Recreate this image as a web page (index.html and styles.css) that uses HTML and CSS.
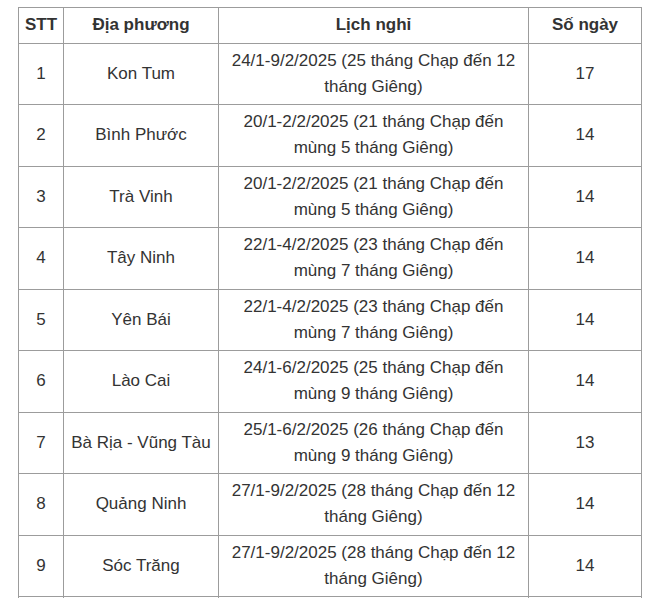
FILE: index.html
```html
<!DOCTYPE html>
<html lang="vi">
<head>
<meta charset="utf-8">
<link rel="stylesheet" href="styles.css">
</head>
<body>
<table class="tbl">
  <colgroup>
    <col class="c1"><col class="c2"><col class="c3"><col class="c4">
  </colgroup>
  <thead>
    <tr><th>STT</th><th>Địa phương</th><th>Lịch nghỉ</th><th>Số ngày</th></tr>
  </thead>
  <tbody>
    <tr><td>1</td><td>Kon Tum</td><td>24/1-9/2/2025 (25 tháng Chạp đến 12 tháng Giêng)</td><td>17</td></tr>
    <tr><td>2</td><td>Bình Phước</td><td>20/1-2/2/2025 (21 tháng Chạp đến mùng 5 tháng Giêng)</td><td>14</td></tr>
    <tr><td>3</td><td>Trà Vinh</td><td>20/1-2/2/2025 (21 tháng Chạp đến mùng 5 tháng Giêng)</td><td>14</td></tr>
    <tr><td>4</td><td>Tây Ninh</td><td>22/1-4/2/2025 (23 tháng Chạp đến mùng 7 tháng Giêng)</td><td>14</td></tr>
    <tr><td>5</td><td>Yên Bái</td><td>22/1-4/2/2025 (23 tháng Chạp đến mùng 7 tháng Giêng)</td><td>14</td></tr>
    <tr><td>6</td><td>Lào Cai</td><td>24/1-6/2/2025 (25 tháng Chạp đến mùng 9 tháng Giêng)</td><td>14</td></tr>
    <tr><td>7</td><td>Bà Rịa - Vũng Tàu</td><td>25/1-6/2/2025 (26 tháng Chạp đến mùng 9 tháng Giêng)</td><td>13</td></tr>
    <tr><td>8</td><td>Quảng Ninh</td><td>27/1-9/2/2025 (28 tháng Chạp đến 12 tháng Giêng)</td><td>14</td></tr>
    <tr><td>9</td><td>Sóc Trăng</td><td>27/1-9/2/2025 (28 tháng Chạp đến 12 tháng Giêng)</td><td>14</td></tr>
    <tr class="more"><td></td><td></td><td></td><td></td></tr>
  </tbody>
</table>
</body>
</html>
```
FILE: styles.css
```css
html, body {
  margin: 0;
  padding: 0;
  background: #ffffff;
}
body {
  font-family: "Liberation Sans", Arial, sans-serif;
  color: #333333;
}
.tbl {
  border-collapse: collapse;
  table-layout: fixed;
  width: 623px;
  margin: 7px 0 0 18px;
  font-size: 17px;
  line-height: 26px;
}
.c1 { width: 45px; }
.c2 { width: 155px; }
.c3 { width: 310px; }
.c4 { width: 113px; }
.tbl th,
.tbl td {
  border: 1px solid #9c9c9c;
  padding: 4.25px 6px;
  text-align: center;
  vertical-align: middle;
}
.tbl th {
  font-weight: bold;
  color: #333333;
}
.tbl .more td {
  height: 52px;
}
```
